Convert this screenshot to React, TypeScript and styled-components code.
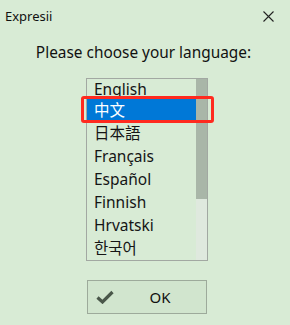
import React from 'react';
import styled, { createGlobalStyle } from 'styled-components';

const GlobalStyle = createGlobalStyle`
  html, body {
    margin: 0;
    padding: 0;
    background: #d8ebd5;
  }
  body {
    font-family: "Noto Sans", "Noto Sans CJK SC", sans-serif;
    color: #1a1a1a;
  }
`;

const languages = [
  'English',
  '中文',
  '日本語',
  'Français',
  'Español',
  'Finnish',
  'Hrvatski',
  '한국어',
];

const StyledWindow = styled.div`
  width: 290px;
  height: 325px;
  background: #d8ebd5;
  display: flex;
  flex-direction: column;
  align-items: center;
  box-sizing: border-box;
  overflow: hidden;
`;

const StyledTitleBar = styled.div`
  align-self: stretch;
  height: 32px;
  display: flex;
  align-items: center;
  justify-content: space-between;
  padding: 0 16px 0 5px;
`;

const StyledTitle = styled.div`
  font-size: 13px;
  color: #111;
`;

const StyledClose = styled.svg`
  width: 11px;
  height: 11px;
`;

const StyledPrompt = styled.div`
  margin-top: 9px;
  margin-right: 3px;
  font-size: 15.4px;
  line-height: 23px;
  color: #111;
`;

const StyledListWrap = styled.div`
  position: relative;
  margin-top: 14px;
  margin-left: 4px;
`;

const StyledList = styled.div`
  width: 120px;
  height: 181px;
  border: 1px solid #a2a8a2;
  display: flex;
  overflow: hidden;
`;

const StyledItems = styled.div`
  flex: 1;
  display: flex;
  flex-direction: column;
`;

const StyledItem = styled.div<{ selected: boolean }>`
  height: 23px;
  line-height: 23px;
  padding-left: 7px;
  font-size: 15.5px;
  font-family: "Noto Sans", "Noto Sans CJK SC", "Noto Sans CJK JP", "Noto Sans CJK KR", sans-serif;
  background: ${({ selected }) => (selected ? '#0078d7' : 'transparent')};
  color: ${({ selected }) => (selected ? '#fff' : '#151515')};
  white-space: nowrap;

  &:first-child {
    height: 20px;
    line-height: 20px;
  }
`;

const StyledScrollbar = styled.div`
  width: 11px;
  background: #dfe9de;
  display: flex;
  flex-direction: column;
`;

const StyledThumb = styled.div`
  height: 120px;
  background: #a9b6a8;
`;

const StyledHighlight = styled.div`
  position: absolute;
  left: -5px;
  top: 18px;
  width: 127px;
  height: 21px;
  border: 3px solid #ff2a1f;
  border-radius: 3px;
`;

const StyledButton = styled.button`
  margin-top: 19px;
  margin-left: 4px;
  width: 120px;
  height: 34px;
  border: 1px solid #9daa9b;
  background: #d1e5ce;
  display: flex;
  align-items: center;
  padding: 0 0 0 8px;
  box-sizing: border-box;
  font-family: "Noto Sans", sans-serif;
  font-size: 15px;
  color: #111;
`;

const StyledCheck = styled.svg`
  width: 18px;
  height: 14px;
`;

const StyledOkLabel = styled.span`
  flex: 1;
  text-align: center;
`;

const App: React.FC = () => {
  return (
    <StyledWindow>
      <GlobalStyle />
      <StyledTitleBar>
        <StyledTitle>Expresii</StyledTitle>
        <StyledClose viewBox="0 0 11 11">
          <path d="M0.5 0.5 L10.5 10.5 M10.5 0.5 L0.5 10.5" stroke="#222" strokeWidth="1.1" fill="none" />
        </StyledClose>
      </StyledTitleBar>
      <StyledPrompt>Please choose your language:</StyledPrompt>
      <StyledListWrap>
        <StyledList>
          <StyledItems>
            {languages.map((lang, i) => (
              <StyledItem key={lang} selected={i === 1}>
                {lang}
              </StyledItem>
            ))}
          </StyledItems>
          <StyledScrollbar>
            <StyledThumb />
          </StyledScrollbar>
        </StyledList>
        <StyledHighlight />
      </StyledListWrap>
      <StyledButton>
        <StyledCheck viewBox="0 0 18 14">
          <path d="M1.5 7.5 L6.5 12 L16.5 2" stroke="#4a574a" strokeWidth="3.2" fill="none" />
        </StyledCheck>
        <StyledOkLabel>OK</StyledOkLabel>
      </StyledButton>
    </StyledWindow>
  );
};

export default App;
